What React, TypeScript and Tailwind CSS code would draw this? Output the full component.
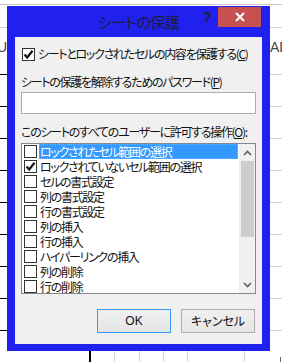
import React from 'react';

const items = [
  { label: 'ロックされたセル範囲の選択', checked: false, selected: true },
  { label: 'ロックされていないセル範囲の選択', checked: true },
  { label: 'セルの書式設定', checked: false },
  { label: '列の書式設定', checked: false },
  { label: '行の書式設定', checked: false },
  { label: '列の挿入', checked: false },
  { label: '行の挿入', checked: false },
  { label: 'ハイパーリンクの挿入', checked: false },
  { label: '列の削除', checked: false },
  { label: '行の削除', checked: false },
];

function CheckBox({ checked }: { checked: boolean }) {
  return (
    <div className="w-[13px] h-[13px] shrink-0 border border-[#333] bg-white flex items-center justify-center">
      {checked && (
        <svg width="11" height="11" viewBox="0 0 11 11">
          <path d="M1.5 5.5 L4.2 8.5 L9.5 1.8" fill="none" stroke="#111" strokeWidth="2.2" />
        </svg>
      )}
    </div>
  );
}

// spreadsheet behind the dialog
function Sheet() {
  const rows = [74, 106, 138, 170, 202, 234, 266, 298, 330];
  const cols = [114, 139, 163, 187, 244];
  return (
    <div className="absolute inset-0">
      <div className="absolute left-0 right-0 top-[4px] h-px bg-[#c6c6c6]" />
      <div className="absolute left-0 right-0 top-[27px] h-px bg-[#d4d4d4]" />
      <div className="absolute left-[-3px] top-[37px] text-[14px] text-[#444] font-['Liberation_Sans',sans-serif]">U</div>
      <div className="absolute left-[270px] top-[37px] text-[14px] text-[#444] font-['Liberation_Sans',sans-serif]">AD</div>
      {rows.map((y) => (
        <React.Fragment key={y}>
          <div className="absolute left-0 w-[7px] h-px bg-black" style={{ top: y }} />
          <div className="absolute left-[270px] right-0 h-px bg-[#d4d4d4]" style={{ top: y }} />
        </React.Fragment>
      ))}
      <div className="absolute left-[89px] top-[351px] w-[2px] h-[11px] bg-black" />
      {cols.map((x) => (
        <div key={x} className="absolute top-[351px] w-px h-[11px] bg-[#d4d4d4]" style={{ left: x }} />
      ))}
      <div className="absolute left-[280px] top-[357px] w-px h-[5px] bg-[#666]" />
    </div>
  );
}

export default function App() {
  return (
    <div className="relative w-[282px] h-[362px] bg-white overflow-hidden font-['Noto_Sans_CJK_JP',sans-serif] [font-feature-settings:'palt'] text-[#111]">
      <Sheet />

      {/* Dialog window */}
      <div className="absolute left-[7px] top-[6px] w-[263px] h-[345px] bg-[#2121ef] flex flex-col px-[8px] pb-[7px]">
        {/* Title bar */}
        <div className="relative h-[31px] shrink-0 flex items-center justify-center">
          <span className="text-[15px] text-[#1c1c3c] tracking-[-0.5px] mt-[2px]">シートの保護</span>
          <span className="absolute left-[188px] top-[1px] text-[14px] font-bold text-[#222] font-['Liberation_Sans',sans-serif]">?</span>
          <div className="absolute left-[203px] top-[1px] w-[43px] h-[20px] bg-[#c75050] flex items-center justify-center">
            <svg width="10" height="10" viewBox="0 0 10 10">
              <path d="M1 1 L9 9 M9 1 L1 9" stroke="#fff" strokeWidth="2" />
            </svg>
          </div>
        </div>

        {/* Body */}
        <div className="flex-1 min-h-0 bg-[#f0f0f0] flex flex-col px-[6px] pb-[10px] text-[12px] leading-[16px] tracking-[-1.3px] whitespace-nowrap">
          <div className="flex items-center gap-[3px] mt-[10px] ml-px h-[14px]">
            <CheckBox checked />
            <span>
              シートとロックされたセルの内容を保護する(<span className="underline">C</span>)
            </span>
          </div>

          <div className="mt-[13px]">
            シートの保護を解除するためのパスワード(<span className="underline">P</span>)
          </div>
          <div className="mt-[2px] h-[22px] w-[235px] shrink-0 bg-white border border-[#adadad]" />

          <div className="mt-[10px]">
            このシートのすべてのユーザーに許可する操作(<span className="underline">O</span>):
          </div>

          <div className="mt-[3px] w-[235px] h-[151px] shrink-0 border border-[#828790] bg-white flex overflow-hidden">
            <div className="flex-1 flex flex-col overflow-hidden">
              {items.map((it) => (
                <div key={it.label} className="h-[15px] flex items-center shrink-0">
                  <div className="ml-[2px]">
                    <CheckBox checked={it.checked} />
                  </div>
                  <span
                    className={
                      it.selected
                        ? 'ml-[2px] h-[15px] flex-1 flex items-center leading-[13px] bg-[#3399ff] text-white outline outline-1 outline-dotted outline-[#e0a040] -outline-offset-1 pl-[1px]'
                        : 'ml-[2px] pl-[1px] leading-[13px]'
                    }
                  >
                    {it.label}
                  </span>
                </div>
              ))}
            </div>
            {/* Scrollbar */}
            <div className="w-[16px] bg-[#f0f0f0] flex flex-col items-center ml-px">
              <div className="h-[17px] flex items-center justify-center">
                <svg width="9" height="6" viewBox="0 0 9 6">
                  <path d="M1 5 L4.5 1.5 L8 5" fill="none" stroke="#606060" strokeWidth="1.6" />
                </svg>
              </div>
              <div className="w-[13px] h-[76px] bg-[#cdcdcd]" />
              <div className="flex-1" />
              <div className="h-[17px] flex items-center justify-center">
                <svg width="9" height="6" viewBox="0 0 9 6">
                  <path d="M1 1 L4.5 4.5 L8 1" fill="none" stroke="#606060" strokeWidth="1.6" />
                </svg>
              </div>
            </div>
          </div>

          <div className="mt-[15px] flex justify-end gap-[10px] pr-[1px] tracking-normal">
            <button className="w-[74px] h-[24px] border border-[#3399ff] bg-gradient-to-b from-[#f0f0f0] to-[#e5e5e5] text-[12px] font-['Liberation_Sans',sans-serif]">
              OK
            </button>
            <button className="w-[74px] h-[24px] border border-[#adadad] bg-gradient-to-b from-[#f0f0f0] to-[#e5e5e5] text-[12px]">
              キャンセル
            </button>
          </div>
        </div>
      </div>
    </div>
  );
}
